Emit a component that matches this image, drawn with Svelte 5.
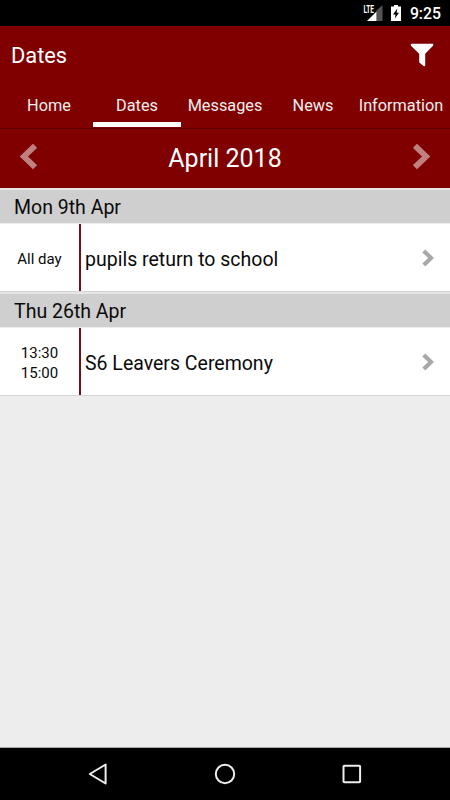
<script>
	let tabs = ['Home', 'Dates', 'Messages', 'News', 'Information'];
	let activeTab = 'Dates';

	let months = ['March 2018', 'April 2018', 'May 2018'];
	let monthIndex = 1;

	let days = [
		{
			label: 'Mon 9th Apr',
			month: 'April 2018',
			events: [{ times: ['All day'], title: 'pupils return to school' }]
		},
		{
			label: 'Thu 26th Apr',
			month: 'April 2018',
			events: [{ times: ['13:30', '15:00'], title: 'S6 Leavers Ceremony' }]
		}
	];

	$: visibleDays = days.filter((day) => day.month === months[monthIndex]);

	function changeMonth(step) {
		monthIndex = Math.min(months.length - 1, Math.max(0, monthIndex + step));
	}
</script>

<div class="screen">
	<div class="status-bar">
		<svg class="signal" width="20" height="18" viewBox="0 0 20 18">
			<path d="M19.500 1v16h-6V6.500z" fill="#555" />
			<path d="M13.500 7.500V17H4z" fill="#fff" />
			<text x="0.500" y="9" textLength="10.500" lengthAdjust="spacingAndGlyphs">LTE</text>
		</svg>
		<svg class="battery" width="10" height="16" viewBox="0 0 10 16">
			<path d="M3 0h4v1.500h3V16H0V1.500h3z" fill="#fff" />
			<path d="M6.300 3.500L2 9.500h2.500L3.800 13.500L8 7.800H5.600z" fill="#000" />
		</svg>
		<span class="clock">9:25</span>
	</div>

	<header class="title-bar">
		<h1>Dates</h1>
		<button class="icon-btn" aria-label="Filter">
			<svg width="24" height="24" viewBox="0 0 24 24">
				<path d="M1.500 0.800h21c1 0 1 1.300 0.300 2.200L15.200 10.800V22.300c0 1-0.800 1.300-1.600 0.700L9.200 19.500V10.800L1.200 3C0.500 2.100 0.500 0.800 1.500 0.800z" fill="#fff" />
			</svg>
		</button>
	</header>

	<nav class="tabs">
		{#each tabs as tab}
			<button class="tab" class:active={tab === activeTab} on:click={() => (activeTab = tab)}>
				{tab}
			</button>
		{/each}
	</nav>

	<div class="month-bar">
		<button class="icon-btn" aria-label="Previous month" on:click={() => changeMonth(-1)}>
			<svg width="18" height="26" viewBox="0 0 18 26">
				<path d="M16 1.800L4.900 12.500l11.100 10.700" fill="none" stroke="#c08080" stroke-width="5.800" />
			</svg>
		</button>
		<h2>{months[monthIndex]}</h2>
		<button class="icon-btn" aria-label="Next month" on:click={() => changeMonth(1)}>
			<svg width="18" height="26" viewBox="0 0 18 26">
				<path d="M2 1.800L13.100 12.500L2 23.200" fill="none" stroke="#c08080" stroke-width="5.800" />
			</svg>
		</button>
	</div>

	<main>
		{#each visibleDays as day}
			<h3>{day.label}</h3>
			{#each day.events as event}
				<div class="event">
					<div class="times">
						{#each event.times as time}
							<span>{time}</span>
						{/each}
					</div>
					<div class="event-title">{event.title}</div>
					<svg width="12" height="18" viewBox="0 0 12 18">
						<path d="M1.800 1.900L9.100 9L1.800 16.100" fill="none" stroke="#a8a8a8" stroke-width="4.200" />
					</svg>
				</div>
			{/each}
		{/each}
	</main>

	<footer class="nav-bar">
		<svg width="20" height="22" viewBox="0 0 20 22">
			<path d="M17.600 1.500v19L1.800 11z" fill="none" stroke="#eee" stroke-width="2" stroke-linejoin="round" />
		</svg>
		<svg width="22" height="22" viewBox="0 0 22 22">
			<circle cx="11" cy="11" r="9.200" fill="none" stroke="#eee" stroke-width="2" />
		</svg>
		<svg width="20" height="20" viewBox="0 0 20 20">
			<rect x="1.500" y="1.700" width="16.600" height="16.600" rx="0.800" fill="none" stroke="#eee" stroke-width="2" />
		</svg>
	</footer>
</div>

<style>
	:global(body) {
		margin: 0;
	}

	.screen {
		display: flex;
		flex-direction: column;
		width: 450px;
		height: 800px;
		overflow: hidden;
		background: #ededed;
		color: #0a0a0a;
		font-family: Roboto, sans-serif;
	}

	h1, h2, h3 {
		margin: 0;
		font-weight: 400;
	}

	button {
		padding: 0;
		border: none;
		background: none;
		color: inherit;
		font-family: inherit;
	}

	svg {
		display: block;
		flex: none;
	}

	.icon-btn {
		display: block;
	}

	.status-bar {
		display: flex;
		align-items: center;
		justify-content: flex-end;
		box-sizing: border-box;
		height: 26px;
		padding-right: 9px;
		background: #000;
		color: #fff;
	}

	.signal {
		margin: 0 8px 0 0;
	}

	.signal text {
		fill: #fff;
		font-size: 10px;
		font-weight: 700;
	}

	.battery {
		margin-right: 9px;
	}

	.clock {
		padding-top: 2px;
		font-size: 15.800px;
		font-weight: 500;
		line-height: 26px;
	}

	.title-bar {
		display: flex;
		align-items: center;
		justify-content: space-between;
		box-sizing: border-box;
		height: 58px;
		padding: 0 16px 0 11px;
		background: #800000;
		color: #fff;
	}

	.title-bar h1 {
		font-size: 21.800px;
	}

	.tabs {
		display: flex;
		box-sizing: border-box;
		height: 45px;
		padding: 0 5px 1px;
		background: #800000;
		border-bottom: 1px solid #650000;
	}

	.tab {
		display: flex;
		align-items: center;
		justify-content: center;
		box-sizing: border-box;
		width: 88px;
		padding-top: 4px;
		border-bottom: 5px solid transparent;
		color: #eee;
		font-size: 16.300px;
		white-space: nowrap;
	}

	.tab.active {
		border-bottom-color: #fff;
	}

	.month-bar {
		display: flex;
		align-items: center;
		justify-content: space-between;
		box-sizing: border-box;
		height: 59px;
		padding: 0 19px 4px;
		background: #800000;
		color: #fff;
	}

	.month-bar h2 {
		padding-top: 3px;
		font-size: 25px;
	}

	main {
		flex: 1;
	}

	h3 {
		box-sizing: border-box;
		height: 36px;
		padding-left: 14px;
		border-top: 2px solid #e6e6e6;
		border-bottom: 1px solid #ededed;
		background: #cfcfcf;
		font-size: 19.500px;
		line-height: 36px;
	}

	.event {
		display: flex;
		align-items: center;
		box-sizing: border-box;
		height: 68px;
		padding-right: 16px;
		border-bottom: 1px solid #d4d4d4;
		background: #fff;
	}

	.times {
		display: flex;
		flex-direction: column;
		justify-content: center;
		box-sizing: border-box;
		align-self: stretch;
		width: 81px;
		padding-top: 2px;
		border-right: 2px solid #701010;
		font-size: 15px;
		line-height: 20px;
		text-align: center;
	}

	.event-title {
		flex: 1;
		padding: 3px 0 0 4px;
		font-size: 19.500px;
	}

	.nav-bar {
		display: flex;
		align-items: center;
		justify-content: space-between;
		box-sizing: border-box;
		height: 53px;
		padding: 0 88px;
		border-top: 1px solid #aaa;
		background: #000;
	}
</style>
